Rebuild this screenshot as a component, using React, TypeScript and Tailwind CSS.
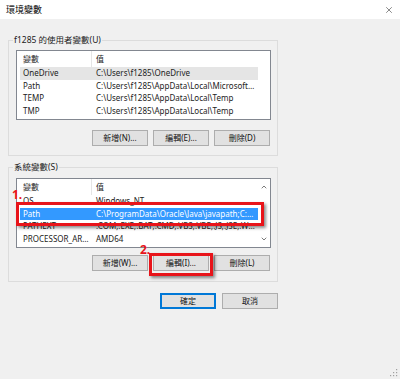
import { X, ChevronUp, ChevronDown } from 'lucide-react';

const font = { fontFamily: '"Segoe UI", "Noto Sans", "Noto Sans CJK TC", sans-serif' };

type Row = { name: string; value: string };

const userVars: Row[] = [
  { name: 'OneDrive', value: 'C:\\Users\\f1285\\OneDrive' },
  { name: 'Path', value: 'C:\\Users\\f1285\\AppData\\Local\\Microsoft\\WindowsApps' },
  { name: 'TEMP', value: 'C:\\Users\\f1285\\AppData\\Local\\Temp' },
  { name: 'TMP', value: 'C:\\Users\\f1285\\AppData\\Local\\Temp' },
];

const sysVars: Row[] = [
  { name: 'OS', value: 'Windows_NT' },
  { name: 'Path', value: 'C:\\ProgramData\\Oracle\\Java\\javapath;C:\\Windows' },
  { name: 'PATHEXT', value: '.COM;.EXE;.BAT;.CMD;.VBS;.VBE;.JS;.JSE;.WSF' },
  { name: 'PROCESSOR_ARCHITECTURE', value: 'AMD64' },
];

function Btn({ label, primary }: { label: string; primary?: boolean }) {
  return (
    <button
      className={`w-[56px] h-[16px] bg-[#e1e1e1] text-[8px] leading-none text-[#111] flex items-center justify-center ${
        primary ? 'border-2 border-[#0078d7]' : 'border border-[#adadad]'
      }`}
    >
      {label}
    </button>
  );
}

function VarList({ rows, hover, selected, scroll }: { rows: Row[]; hover?: number; selected?: number; scroll?: boolean }) {
  return (
    <div className="relative w-[255px] h-[70px] bg-white border border-[#828790] flex">
      <div className="flex-1 min-w-0 pl-[3px]">
        <div className="h-[16px] flex items-center text-[8px] text-[#222]">
          <div className="w-[72px] pl-[3px] h-full flex items-center border-r border-[#e5e5e5]">變數</div>
          <div className="pl-[4px]">值</div>
        </div>
        {rows.map((r, i) => (
          <div
            key={r.name}
            className={`h-[12.5px] flex items-center text-[8px] ${
              i === selected ? 'bg-[#3399ff] text-white' : i === hover ? 'bg-[#e5e5e5] text-[#222]' : 'text-[#222]'
            }`}
          >
            <div className="w-[72px] pl-[3px] truncate pr-[2px]">{r.name}</div>
            <div className="flex-1 min-w-0 pl-[4px] truncate pr-[2px]">{r.value}</div>
          </div>
        ))}
      </div>
      <div className="w-[12px] flex flex-col justify-between items-center py-[4px] text-[#606060]">
        {scroll ? (
          <>
            <ChevronUp size={8} strokeWidth={2.5} />
            <ChevronDown size={8} strokeWidth={2.5} />
          </>
        ) : null}
      </div>
    </div>
  );
}

export default function App() {
  return (
    <div className="w-[400px] h-[379px] bg-[#f0f0f0] relative overflow-hidden" style={font}>
      <div className="h-[19px] bg-white flex items-center justify-between pl-[6px] pr-[6px]">
        <span className="text-[9px] text-black">環境變數</span>
        <X size={10} strokeWidth={1.5} className="text-[#444]" />
      </div>

      <div className="pl-[8px] pt-[21px] w-[278px]">
        {/* user variables */}
        <div className="relative border border-[#dcdcdc] w-[270px] pt-[9px] pb-[9px] pl-[7px] pr-[7px]">
          <span className="absolute -top-[7px] left-[4px] px-[1px] bg-[#f0f0f0] text-[8.5px] text-[#222] leading-[12px]">
            f1285 的使用者變數(U)
          </span>
          <VarList rows={userVars} hover={0} />
          <div className="flex justify-end gap-[5px] mt-[10px]">
            <Btn label="新增(N)..." />
            <Btn label="編輯(E)..." />
            <Btn label="刪除(D)" />
          </div>
        </div>

        {/* system variables */}
        <div className="relative border border-[#dcdcdc] w-[270px] mt-[11px] pt-[10px] pb-[10px] pl-[7px] pr-[7px]">
          <span className="absolute -top-[7px] left-[4px] px-[1px] bg-[#f0f0f0] text-[8.5px] text-[#222] leading-[12px]">
            系統變數(S)
          </span>
          <div className="relative">
            <VarList rows={sysVars} selected={1} scroll />
            <div className="absolute left-0 top-[24px] w-[248px] h-[24px] border-[3px] border-[#e8141a] shadow-[2px_2px_3px_rgba(0,0,0,0.45)]" />
            <span className="absolute -left-[4px] top-[11px] text-[12px] font-bold leading-none text-[#e8141a]">1.</span>
          </div>
          <div className="flex justify-end gap-[5px] mt-[7px]">
            <Btn label="新增(W)..." />
            <div className="relative">
              <Btn label="編輯(I)..." />
              <div className="absolute -left-[4px] -top-[2px] w-[64px] h-[23px] border-[3px] border-[#e8141a] shadow-[2px_2px_3px_rgba(0,0,0,0.45)]" />
              <span className="absolute -left-[13px] -top-[11px] text-[12px] font-bold leading-none text-[#e8141a]">2.</span>
            </div>
            <Btn label="刪除(L)" />
          </div>
        </div>

        <div className="flex justify-end gap-[6px] mt-[11px]">
          <Btn label="確定" primary />
          <Btn label="取消" />
        </div>
      </div>

      <svg className="absolute right-[2px] bottom-[2px]" width="8" height="8" viewBox="0 0 8 8">
        <rect x="6" y="0" width="1.2" height="1.2" fill="#a0a0a0" />
        <rect x="6" y="3" width="1.2" height="1.2" fill="#a0a0a0" />
        <rect x="3" y="3" width="1.2" height="1.2" fill="#a0a0a0" />
        <rect x="6" y="6" width="1.2" height="1.2" fill="#a0a0a0" />
        <rect x="3" y="6" width="1.2" height="1.2" fill="#a0a0a0" />
        <rect x="0" y="6" width="1.2" height="1.2" fill="#a0a0a0" />
      </svg>
    </div>
  );
}
